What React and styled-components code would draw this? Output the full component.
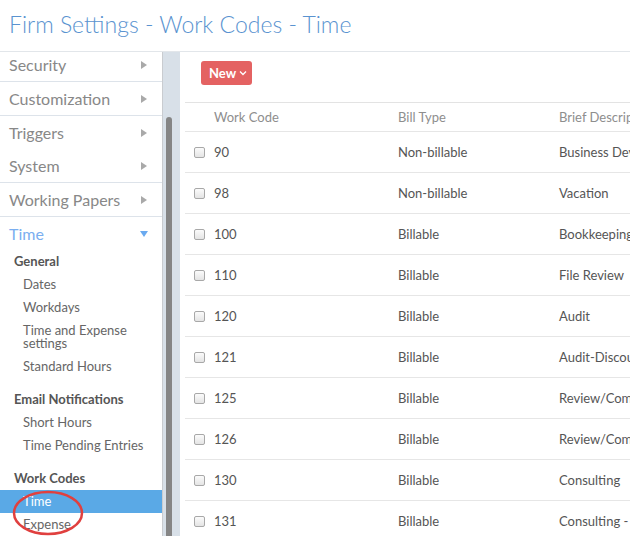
import React from "react";
import styled, { createGlobalStyle } from "styled-components";

const Global = createGlobalStyle`
  html, body { margin: 0; padding: 0; background: #fff; }
  body { font-family: Lato, "Open Sans", sans-serif; width: 630px; height: 536px; overflow: hidden; }
  * { box-sizing: border-box; }
`;

const Page = styled.div`
  width: 630px;
  height: 536px;
  display: flex;
  flex-direction: column;
  overflow: hidden;
`;

const Title = styled.h1`
  margin: 0;
  height: 52px;
  padding: 10px 0 0 9px;
  font-size: 23px;
  font-weight: 300;
  line-height: 29px;
  color: #5a93d0;
  border-bottom: 1px solid #e2e6ea;
  flex: none;
`;

const Main = styled.div`
  flex: 1;
  display: flex;
  min-height: 0;
`;

const Sidebar = styled.nav`
  position: relative;
  width: 163px;
  flex: none;
  overflow: hidden;
  border-right: 1px solid #c9ccd0;
`;

const SideInner = styled.div`
  margin-top: -4px;
  position: relative;
`;

const NavRow = styled.div`
  height: ${(p) => (p.$border ? 34 : 33)}px;
  border-bottom: ${(p) => (p.$border ? "1px solid #dde3ea" : "none")};
  display: flex;
  align-items: center;
  justify-content: space-between;
  padding: 0 15px 0 9px;
  font-size: 16px;
  color: ${(p) => (p.$active ? "#7aaef0" : "#888")};
`;

const RightArrow = styled.span`
  width: 0;
  height: 0;
  border-top: 4px solid transparent;
  border-bottom: 4px solid transparent;
  border-left: 6px solid #a9a9a9;
`;

const DownArrow = styled.span`
  width: 0;
  height: 0;
  margin-right: -1px;
  border-left: 4px solid transparent;
  border-right: 4px solid transparent;
  border-top: 6px solid #6aaaf0;
`;

const Group = styled.div`
  margin-bottom: 10px;
`;

const GroupHead = styled.div`
  padding: 5px 0 5px 14px;
  font-size: 13px;
  line-height: 13px;
  font-weight: 700;
  color: #555;
`;

const SubItem = styled.div`
  padding: 5px 10px 5px 23px;
  font-size: 13px;
  line-height: 13px;
  color: ${(p) => (p.$selected ? "#fff" : "#666")};
  background: ${(p) => (p.$selected ? "#5aa9e6" : "transparent")};
`;

const Circle = styled.svg`
  position: absolute;
  left: 12px;
  top: 442px;
  width: 72px;
  height: 46px;
  overflow: visible;
  pointer-events: none;
`;

const Track = styled.div`
  width: 17px;
  flex: none;
  background: #d8e0e8;
  position: relative;
`;

const Thumb = styled.div`
  position: absolute;
  left: 3px;
  top: 65px;
  width: 6px;
  bottom: -10px;
  background: #858585;
  border-radius: 3px;
`;

const Content = styled.section`
  flex: 1;
  min-width: 0;
  overflow: hidden;
  padding: 9px 0 0 5px;
`;

const NewButton = styled.button`
  margin-left: 16px;
  height: 24px;
  width: 51px;
  border: none;
  border-radius: 3px;
  background: #e46262;
  color: #fff;
  font-family: Lato, sans-serif;
  font-weight: 700;
  font-size: 13px;
  display: flex;
  align-items: center;
  gap: 3px;
  padding: 0 0 0 8px;
`;

const Table = styled.div`
  margin-top: 17px;
  border-top: 1px solid #e3e3e3;
  width: 520px;
`;

const Row = styled.div`
  display: grid;
  grid-template-columns: 29px 184px 161px 1fr;
  align-items: center;
  height: ${(p) => (p.$head ? 29 : 41)}px;
  padding-bottom: ${(p) => (p.$head ? 1 : 1)}px;
  border-bottom: 1px solid #e6e6e6;
  font-size: 13px;
  color: ${(p) => (p.$head ? "#8e8e8e" : "#555")};
  white-space: nowrap;
`;

const Cell = styled.div`
  overflow: visible;
`;

const Check = styled.span`
  display: block;
  margin-left: 9px;
  margin-top: 1px;
  width: 11px;
  height: 11px;
  border: 1px solid #a8a8a8;
  border-radius: 2px;
  background: linear-gradient(#fbfbfb, #e4e4e4);
`;

const nav = [
  { label: "Security", border: true },
  { label: "Customization", border: true },
  { label: "Triggers", border: false },
  { label: "System", border: true },
  { label: "Working Papers", border: true },
];

const groups = [
  { head: "General", items: ["Dates", "Workdays", "Time and Expense settings", "Standard Hours"] },
  { head: "Email Notifications", items: ["Short Hours", "Time Pending Entries"] },
  { head: "Work Codes", items: ["Time", "Expense"] },
];

const rows = [
  ["90", "Non-billable", "Business Development"],
  ["98", "Non-billable", "Vacation"],
  ["100", "Billable", "Bookkeeping"],
  ["110", "Billable", "File Review"],
  ["120", "Billable", "Audit"],
  ["121", "Billable", "Audit-Discount"],
  ["125", "Billable", "Review/Compilation"],
  ["126", "Billable", "Review/Compilation"],
  ["130", "Billable", "Consulting"],
  ["131", "Billable", "Consulting - Other"],
];

export default function App() {
  return (
    <Page>
      <Global />
      <Title>Firm Settings - Work Codes - Time</Title>
      <Main>
        <Sidebar>
          <SideInner>
            {nav.map((n) => (
              <NavRow key={n.label} $border={n.border}>
                <span>{n.label}</span>
                <RightArrow />
              </NavRow>
            ))}
            <NavRow $active>
              <span>Time</span>
              <DownArrow />
            </NavRow>
            {groups.map((g) => (
              <Group key={g.head}>
                <GroupHead>{g.head}</GroupHead>
                {g.items.map((it) => (
                  <SubItem key={it} $selected={g.head === "Work Codes" && it === "Time"}>
                    {it}
                  </SubItem>
                ))}
              </Group>
            ))}
            <Circle viewBox="0 0 72 46">
              <ellipse cx="36" cy="23" rx="34" ry="21" fill="none" stroke="#e0403f" strokeWidth="2.5" />
            </Circle>
          </SideInner>
        </Sidebar>
        <Track>
          <Thumb />
        </Track>
        <Content>
          <NewButton>
            New
            <svg width="8" height="6" viewBox="0 0 8 6">
              <path d="M1 1.5 L4 4.5 L7 1.5" fill="none" stroke="#fff" strokeWidth="1.3" />
            </svg>
          </NewButton>
          <Table>
            <Row $head>
              <Cell />
              <Cell>Work Code</Cell>
              <Cell>Bill Type</Cell>
              <Cell>Brief Description</Cell>
            </Row>
            {rows.map((r) => (
              <Row key={r[0]}>
                <Cell>
                  <Check />
                </Cell>
                <Cell>{r[0]}</Cell>
                <Cell>{r[1]}</Cell>
                <Cell>{r[2]}</Cell>
              </Row>
            ))}
          </Table>
        </Content>
      </Main>
    </Page>
  );
}
